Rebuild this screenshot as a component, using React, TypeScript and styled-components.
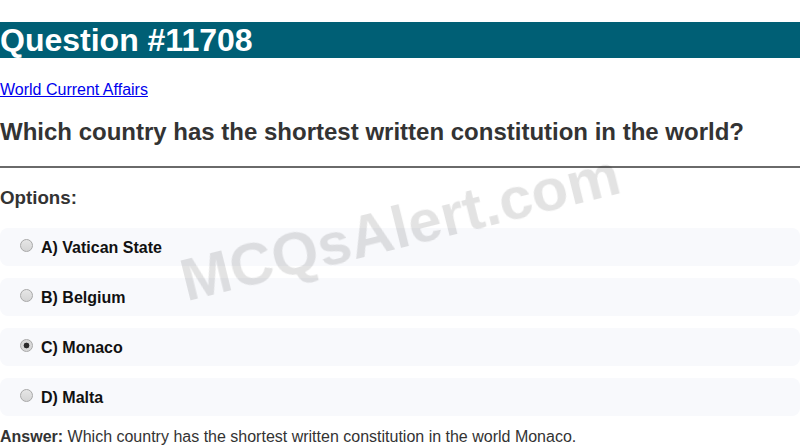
import styled, { createGlobalStyle } from "styled-components";

const GlobalStyle = createGlobalStyle`
  body {
    margin: 0;
    font-family: "Liberation Sans", Arial, sans-serif;
    color: #333;
    background: #fff;
  }
`;

const Page = styled.div`
  width: 100%;
`;

const Title = styled.h1`
  margin: 22.4px 0;
  background: #005f75;
  color: #fff;
  font-size: 32px;
  line-height: 36px;
  font-weight: bold;
`;

const CategoryLink = styled.a`
  color: #0000ee;
  font-size: 16px;
  line-height: 18px;
  display: inline-block;
`;

const Question = styled.h2`
  margin: 19px 0 19.9px;
  font-size: 24px;
  line-height: 28px;
  color: #333;
`;

const Divider = styled.hr`
  margin: 0;
  border: none;
  border-top: 2px solid #6a6a6a;
`;

const OptionsHeading = styled.h3`
  margin: 19.7px 0 19px;
  font-size: 18.72px;
  line-height: 22px;
  color: #333;
`;

const OptionList = styled.div`
  display: flex;
  flex-direction: column;
  gap: 12px;
`;

const Option = styled.label`
  display: flex;
  align-items: center;
  height: 38px;
  box-sizing: border-box;
  padding: 2px 20px 0;
  background: #f8f9fc;
  border-radius: 8px;
  font-size: 16px;
  font-weight: bold;
  color: #111;
`;

const Radio = styled.input`
  appearance: none;
  width: 13px;
  height: 13px;
  margin: 0 8px 0 0;
  box-sizing: border-box;
  border: 1px solid #a8a8a8;
  border-radius: 50%;
  background: linear-gradient(#e6e6e6, #d4d4d4);
  transform: translateY(-3px);

  &:checked {
    background: radial-gradient(circle, #2a2a2a 0 2.6px, #d8d8d8 3.2px);
  }
`;

const Answer = styled.p`
  margin: 12px 0 0;
  font-size: 16px;
  line-height: 18px;
  color: #333;
`;

const Watermark = styled.div`
  position: fixed;
  top: 50%;
  left: 50%;
  transform: translate(-50%, calc(-50% + 4px)) rotate(-14deg);
  font-size: 60px;
  font-weight: bold;
  color: rgba(0, 0, 0, 0.11);
  white-space: nowrap;
  pointer-events: none;
`;

const options = [
  { label: "A) Vatican State", checked: false },
  { label: "B) Belgium", checked: false },
  { label: "C) Monaco", checked: true },
  { label: "D) Malta", checked: false },
];

export default function App() {
  return (
    <Page>
      <GlobalStyle />
      <Title>Question #11708</Title>
      <CategoryLink href="#">World Current Affairs</CategoryLink>
      <Question>
        Which country has the shortest written constitution in the world?
      </Question>
      <Divider />
      <OptionsHeading>Options:</OptionsHeading>
      <OptionList>
        {options.map((o) => (
          <Option key={o.label}>
            <Radio type="radio" name="q" disabled defaultChecked={o.checked} />
            {o.label}
          </Option>
        ))}
      </OptionList>
      <Answer>
        <strong>Answer:</strong> Which country has the shortest written
        constitution in the world Monaco.
      </Answer>
      <Watermark>MCQsAlert.com</Watermark>
    </Page>
  );
}
